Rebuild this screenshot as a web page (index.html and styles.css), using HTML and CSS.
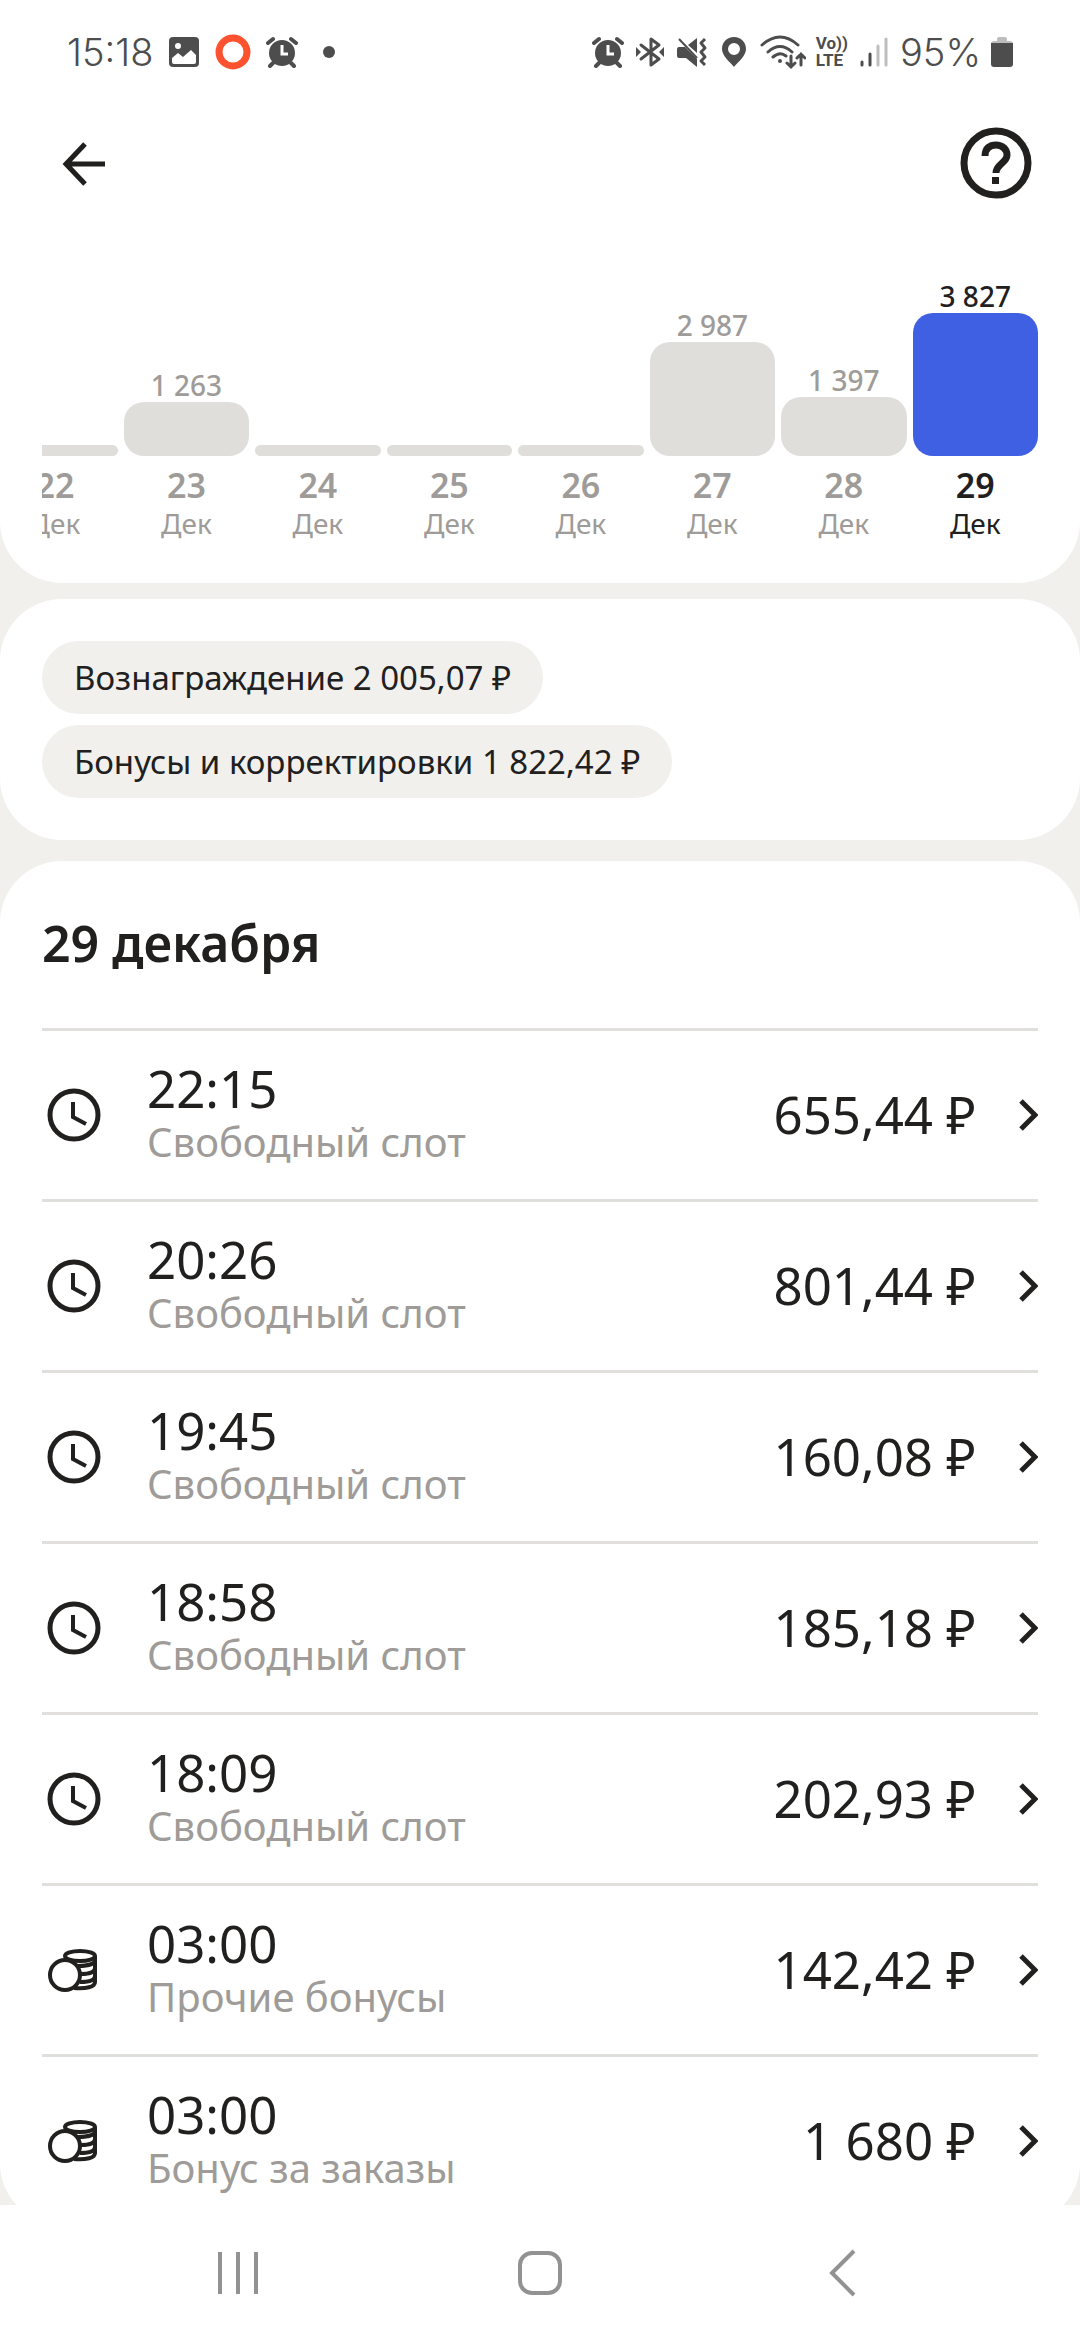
FILE: index.html
```html
<!DOCTYPE html>
<html lang="ru">

<head>
    <meta charset="UTF-8">
    <meta name="viewport" content="width=device-width, initial-scale=1.0">
    <title>29 декабря</title>
    <link rel="stylesheet" href="styles.css">
</head>

<body>

    <!-- icons used more than once -->
    <svg class="sprite" aria-hidden="true">
        <symbol id="alarm" viewBox="0 0 32 32">
            <circle cx="16" cy="17" r="13" />
            <path d="M2 7 L7 3 M30 7 L25 3 M7 27 L4 30 M25 27 L28 30" fill="none" stroke="currentColor" stroke-width="4" stroke-linecap="round" />
            <path d="M16 9 V18 H22" fill="none" stroke="#fff" stroke-width="3" />
        </symbol>
        <symbol id="clock" viewBox="0 0 54 54">
            <circle cx="27" cy="27" r="24" fill="none" stroke="currentColor" stroke-width="5" />
            <path d="M26 14 V29 L39 36" fill="none" stroke="currentColor" stroke-width="4" />
        </symbol>
        <symbol id="coins" viewBox="0 0 54 54">
            <g fill="none" stroke="currentColor" stroke-width="4">
                <ellipse cx="33" cy="13" rx="15" ry="5" />
                <path d="M48 13 V39 C48 44 39 46 27 45" />
                <path d="M31 23 C41 23 48 21 48 17 M34 31 C42 31 48 29 48 25 M33 39 C42 39 48 37 48 33" />
                <circle cx="18" cy="32" r="15" fill="#fff" />
            </g>
        </symbol>
        <symbol id="chevron" viewBox="0 0 20 34">
            <path d="M3 3 L17 17 L3 31" fill="none" stroke="currentColor" stroke-width="5" />
        </symbol>
    </svg>

    <div class="status-bar">
        <div class="status-left">
            <span class="status-text">15:18</span>
            <svg class="status-icon" viewBox="0 0 32 32">
                <rect x="1" y="1" width="30" height="30" rx="4" />
                <circle cx="10" cy="10" r="3" fill="#fff" />
                <path d="M4 22 L10 17 L15 21 L23 14 L28 19 V26 Q28 28 26 28 H6 Q4 28 4 26 Z" fill="#fff" />
            </svg>
            <svg class="status-icon ring" viewBox="0 0 36 36">
                <circle cx="18" cy="18" r="14" fill="none" stroke="#fc5230" stroke-width="7" />
            </svg>
            <svg class="status-icon"><use href="#alarm" /></svg>
            <span class="dot"></span>
        </div>
        <div class="status-right">
            <svg class="status-icon"><use href="#alarm" /></svg>
            <svg class="status-icon" viewBox="0 0 32 32">
                <path d="M7 9 L25 23 L17 29 V3 L25 9 L7 23" fill="none" stroke="currentColor" stroke-width="3" stroke-linejoin="round" stroke-linecap="round" />
                <path d="M2 11 L7 16 L2 21 Z M30 11 L25 16 L30 21 Z" />
            </svg>
            <svg class="status-icon" viewBox="0 0 32 32">
                <path d="M1 13 Q1 11 3 11 H9 L21 23 V31 L10 22 H3 Q1 22 1 20 Z M12 9 L21 2 V17 Z" />
                <path d="M3 3 L21 22" fill="none" stroke="currentColor" stroke-width="2" />
                <path d="M29 3 L25 7 L29 12 L25 16 L29 21 L25 25 L29 29" fill="none" stroke="currentColor" stroke-width="3" stroke-linejoin="round" />
            </svg>
            <svg class="status-icon" viewBox="0 0 32 32">
                <path fill-rule="evenodd" d="M16 1 C23 1 28 6 28 13 C28 20 20 26 16 31 C12 26 4 20 4 13 C4 6 9 1 16 1 Z M16 7 A6 6 0 1 0 16 19 A6 6 0 1 0 16 7 Z" />
            </svg>
            <svg class="status-icon wifi" viewBox="0 0 46 36">
                <g fill="none" stroke="currentColor" stroke-width="3" stroke-linecap="round">
                    <path d="M2 11 Q20 -5 38 11 M8 18 Q20 7 32 18 M13 23 Q20 17 26 22" />
                    <path d="M31 22 V33 M27 29 L31 33 L35 29 M41 31 V20 M37 24 L41 20 L45 24" />
                </g>
                <circle cx="20" cy="27" r="2" />
            </svg>
            <div class="volte"><span>Vo))</span><span>LTE</span></div>
            <svg class="status-icon" viewBox="0 0 32 32">
                <g fill="none" stroke="currentColor" stroke-width="3" stroke-linecap="round">
                    <path d="M4 26 V29 M12 18 V29" />
                    <path d="M20 10 V29 M28 3 V29" stroke="#bdbdbd" />
                </g>
            </svg>
            <span class="status-text">95%</span>
            <svg class="status-icon battery" viewBox="0 0 22 32">
                <path d="M6 3 Q6 1 8 1 H14 Q16 1 16 3 V5 H19 Q22 5 22 8 H0 Q0 5 3 5 H6 Z" fill="#bdbdbd" />
                <path d="M0 7 H22 V28 Q22 31 19 31 H3 Q0 31 0 28 Z" />
            </svg>
        </div>
    </div>

    <main>
        <section class="card chart-card">
            <header class="top-bar">
                <button class="icon-btn" aria-label="Назад">
                    <svg viewBox="0 0 72 72">
                        <path d="M59 37 H20 M39 17 L20 37 L39 57" fill="none" stroke="currentColor" stroke-width="5" />
                    </svg>
                </button>
                <button class="icon-btn" aria-label="Помощь">
                    <svg viewBox="0 0 72 72">
                        <circle cx="36" cy="36" r="32" fill="none" stroke="currentColor" stroke-width="7" />
                        <path d="M25 29 C25 21 30 18 36 18 C42 18 47 22 47 28 C47 36 36 37 36 46" fill="none" stroke="currentColor" stroke-width="7" />
                        <rect x="32" y="50" width="7" height="7" fill="currentColor" />
                    </svg>
                </button>
            </header>

            <div class="chart">
                <div class="days">
                    <a href="#" class="day"><span class="bar" style="height: 11px"></span><b>22</b><small>Дек</small></a>
                    <a href="#" class="day"><span class="sum">1 263</span><span class="bar" style="height: 54px"></span><b>23</b><small>Дек</small></a>
                    <a href="#" class="day"><span class="bar" style="height: 11px"></span><b>24</b><small>Дек</small></a>
                    <a href="#" class="day"><span class="bar" style="height: 11px"></span><b>25</b><small>Дек</small></a>
                    <a href="#" class="day"><span class="bar" style="height: 11px"></span><b>26</b><small>Дек</small></a>
                    <a href="#" class="day"><span class="sum">2 987</span><span class="bar" style="height: 114px"></span><b>27</b><small>Дек</small></a>
                    <a href="#" class="day"><span class="sum">1 397</span><span class="bar" style="height: 59px"></span><b>28</b><small>Дек</small></a>
                    <a href="#" class="day active"><span class="sum">3 827</span><span class="bar" style="height: 143px"></span><b>29</b><small>Дек</small></a>
                </div>
            </div>
        </section>

        <section class="card chips">
            <span class="chip">Вознаграждение 2 005,07 ₽</span>
            <span class="chip">Бонусы и корректировки 1 822,42 ₽</span>
        </section>

        <section class="card list-card">
            <h1>29 декабря</h1>
            <a href="#" class="row">
                <svg class="row-icon"><use href="#clock" /></svg>
                <span class="info"><span class="time">22:15</span><span class="type">Свободный слот</span></span>
                <span class="amount">655,44 ₽</span>
                <svg class="chevron"><use href="#chevron" /></svg>
            </a>
            <a href="#" class="row">
                <svg class="row-icon"><use href="#clock" /></svg>
                <span class="info"><span class="time">20:26</span><span class="type">Свободный слот</span></span>
                <span class="amount">801,44 ₽</span>
                <svg class="chevron"><use href="#chevron" /></svg>
            </a>
            <a href="#" class="row">
                <svg class="row-icon"><use href="#clock" /></svg>
                <span class="info"><span class="time">19:45</span><span class="type">Свободный слот</span></span>
                <span class="amount">160,08 ₽</span>
                <svg class="chevron"><use href="#chevron" /></svg>
            </a>
            <a href="#" class="row">
                <svg class="row-icon"><use href="#clock" /></svg>
                <span class="info"><span class="time">18:58</span><span class="type">Свободный слот</span></span>
                <span class="amount">185,18 ₽</span>
                <svg class="chevron"><use href="#chevron" /></svg>
            </a>
            <a href="#" class="row">
                <svg class="row-icon"><use href="#clock" /></svg>
                <span class="info"><span class="time">18:09</span><span class="type">Свободный слот</span></span>
                <span class="amount">202,93 ₽</span>
                <svg class="chevron"><use href="#chevron" /></svg>
            </a>
            <a href="#" class="row">
                <svg class="row-icon"><use href="#coins" /></svg>
                <span class="info"><span class="time">03:00</span><span class="type">Прочие бонусы</span></span>
                <span class="amount">142,42 ₽</span>
                <svg class="chevron"><use href="#chevron" /></svg>
            </a>
            <a href="#" class="row">
                <svg class="row-icon"><use href="#coins" /></svg>
                <span class="info"><span class="time">03:00</span><span class="type">Бонус за заказы</span></span>
                <span class="amount">1 680 ₽</span>
                <svg class="chevron"><use href="#chevron" /></svg>
            </a>
        </section>
    </main>

    <nav class="nav-bar">
        <button aria-label="Последние приложения">
            <svg viewBox="0 0 48 48"><path d="M6 3 V45 M24 3 V45 M42 3 V45" /></svg>
        </button>
        <button aria-label="Главный экран">
            <svg viewBox="0 0 48 48"><rect x="4" y="4" width="40" height="40" rx="12" /></svg>
        </button>
        <button aria-label="Назад">
            <svg viewBox="0 0 48 48"><path d="M36 2 L14 24 L36 46" /></svg>
        </button>
    </nav>

</body>

</html>
```
FILE: styles.css
```css
* {
    margin: 0;
    padding: 0;
    box-sizing: border-box;
}

body {
    height: 100vh;
    display: flex;
    flex-direction: column;
    font-family: "Noto Sans", "Open Sans", sans-serif;
    background: #fff;
    color: #21201f;
}

a {
    color: inherit;
    text-decoration: none;
}

button {
    border: none;
    background: none;
    color: inherit;
    cursor: pointer;
}

.sprite {
    display: none;
}

/* status bar */
.status-bar {
    height: 103px;
    padding: 0 67px;
    display: flex;
    flex-shrink: 0;
    justify-content: space-between;
    align-items: center;
    color: #4d4d4d;
}

.status-left,
.status-right {
    display: flex;
    align-items: center;
    gap: 10px;
}

.status-left {
    gap: 15px;
}

.status-text {
    font-family: Inter, Roboto, sans-serif;
    font-weight: 300;
    font-size: 38px;
    line-height: 48px;
}

.status-icon {
    width: 32px;
    height: 32px;
    fill: currentColor;
}

.status-icon.ring {
    width: 36px;
    height: 36px;
}

.status-icon.wifi {
    width: 46px;
    height: 36px;
}

.status-icon.battery {
    width: 22px;
}

.dot {
    width: 12px;
    height: 12px;
    margin-left: 10px;
    border-radius: 50%;
    background: currentColor;
}

.volte {
    display: flex;
    flex-direction: column;
    font-family: Roboto, sans-serif;
    font-weight: 700;
    font-size: 17px;
    line-height: 17px;
}

/* content */
main {
    flex: 1;
    min-height: 0;
    overflow: hidden;
    background: #f1f0ec;
}

.card {
    padding: 42px;
    border-radius: 62px;
    background: #fff;
}

.chart-card {
    padding-top: 22px;
    border-top-left-radius: 0;
    border-top-right-radius: 0;
}

.top-bar {
    display: flex;
    justify-content: space-between;
    padding: 2px 6px 0 4px;
}

.icon-btn,
.icon-btn svg {
    display: block;
    width: 72px;
    height: 72px;
}

.chart {
    display: flex;
    justify-content: flex-end;
    margin-top: 60px;
    padding-top: 20px;
    overflow: hidden;
}

.days {
    flex: 0 0 105%;
    display: grid;
    grid-template-columns: repeat(8, 1fr);
    gap: 6px;
}

.day {
    display: flex;
    flex-direction: column;
    justify-content: flex-end;
    align-items: center;
    color: #9e9b98;
}

.sum {
    font-size: 28px;
    font-weight: 500;
    line-height: 34px;
}

.bar {
    width: 100%;
    border-radius: 20px;
    background: #dfdeda;
}

.day b {
    margin-top: 9px;
    font-size: 34px;
    font-weight: 600;
    line-height: 40px;
}

.day small {
    font-size: 28px;
    line-height: 36px;
}

.day.active {
    color: #21201f;
}

.day.active .bar {
    background: #4060e3;
}

.chips {
    margin-top: 16px;
    display: flex;
    flex-direction: column;
    align-items: flex-start;
    gap: 11px;
}

.chip {
    padding: 0 32px;
    border-radius: 37px;
    background: #f1f0ec;
    font-size: 33px;
    line-height: 73px;
}

/* list of payments */
.list-card {
    margin-top: 21px;
    padding-bottom: 0;
}

h1 {
    margin-bottom: 45px;
    font-size: 50px;
    font-weight: 600;
    line-height: 80px;
}

.row {
    height: 171px;
    display: flex;
    align-items: center;
    border-top: 3px solid #e0dfdb;
}

.row-icon {
    width: 54px;
    height: 54px;
    margin: 0 46px 0 5px;
}

.info {
    flex: 1;
    display: flex;
    flex-direction: column;
    padding-bottom: 6px;
}

.time,
.amount {
    font-size: 51px;
    line-height: 60px;
}

.type {
    font-size: 40px;
    line-height: 48px;
    color: #9e9b98;
}

.amount {
    padding-bottom: 2px;
}

.chevron {
    width: 20px;
    height: 34px;
    margin-left: 42px;
}

/* system navigation */
.nav-bar {
    height: 135px;
    display: flex;
    flex-shrink: 0;
    justify-content: center;
    align-items: center;
    gap: 254px;
}

.nav-bar svg {
    display: block;
    width: 48px;
    height: 48px;
    fill: none;
    stroke: #929292;
    stroke-width: 4px;
}
```
